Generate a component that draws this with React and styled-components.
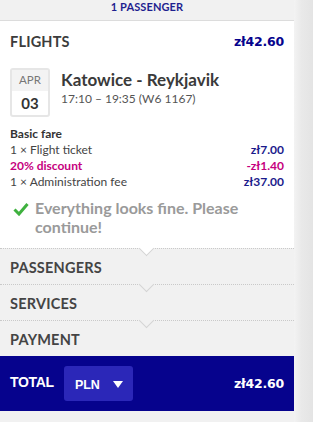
import React from 'react';
import styled, { createGlobalStyle } from 'styled-components';

const Global = createGlobalStyle`
  html, body { margin: 0; padding: 0; background: #ebebeb; }
  body { font-family: Lato, "Open Sans", sans-serif; }
`;

const Page = styled.div`
  display: flex;
  width: 313px;
  height: 422px;
  overflow: hidden;
`;

const Panel = styled.div`
  width: 294px;
  display: flex;
  flex-direction: column;
  background: #f1f1f1;
`;

const Side = styled.div`
  flex: 1;
  background: linear-gradient(90deg, #f3f3f3 0, #e9e9e9 40%, #e4e4e4 100%);
`;

const Passenger = styled.div`
  height: 21px;
  border-bottom: 1px solid #dcdcdc;
  display: flex;
  align-items: flex-start;
  justify-content: center;
  font-size: 11px;
  font-weight: 700;
  color: #1f1f8f;
  line-height: 13px;
  padding-top: 0;
  letter-spacing: 0.1px;
  box-sizing: border-box;
`;

const Card = styled.div`
  background: #fff;
  padding: 12px 10px 0 10px;
  height: 227px;
  box-sizing: border-box;
`;

const Head = styled.div`
  display: flex;
  justify-content: space-between;
  align-items: center;
  height: 16px;
`;

const Title = styled.div`
  font-size: 14.5px;
  font-weight: 700;
  color: #3c3c3c;
  letter-spacing: 0.2px;
`;

const Price = styled.div`
  font-family: "DejaVu Sans", Verdana, sans-serif;
  font-size: 12.5px;
  font-weight: 700;
  color: ${p => p.$light ? '#fff' : '#06038d'};
  letter-spacing: -0.2px;
`;

const Flight = styled.div`
  display: flex;
  gap: 11px;
  margin-top: 19px;
`;

const DateBox = styled.div`
  width: 36px;
  border: 2px solid #e6e6e6;
  border-radius: 3px;
  display: flex;
  flex-direction: column;
  align-items: center;
`;

const Month = styled.div`
  width: 100%;
  text-align: center;
  background: #f3f3f3;
  color: #777;
  font-size: 11.5px;
  height: 21px;
  line-height: 20px;
`;

const Day = styled.div`
  font-size: 15px;
  font-weight: 700;
  color: #333;
  height: 24px;
  line-height: 24px;
`;

const Route = styled.div`
  display: flex;
  flex-direction: column;
  padding-top: 1px;
`;

const City = styled.div`
  font-size: 17px;
  font-weight: 700;
  color: #3a3a3a;
  line-height: 21px;
`;

const Time = styled.div`
  font-size: 12px;
  color: #555;
  line-height: 16px;
  margin-top: 1px;
`;

const Fare = styled.div`
  margin-top: 9px;
  font-size: 12px;
  line-height: 16px;
`;

const FareTitle = styled.div`
  font-weight: 700;
  color: #333;
`;

const Line = styled.div`
  display: flex;
  justify-content: space-between;
  color: ${p => p.$pink ? '#c6007e' : '#444'};
  font-weight: ${p => p.$pink ? 700 : 400};
`;

const Amount = styled.span`
  font-weight: 700;
  color: ${p => p.$pink ? '#c6007e' : '#1a1a8c'};
`;

const Notice = styled.div`
  display: flex;
  align-items: flex-start;
  gap: 6px;
  margin-top: 8px;
  padding-left: 3px;
  font-size: 16px;
  font-weight: 700;
  color: #9a9a9a;
  line-height: 19px;
`;

const Step = styled.div`
  position: relative;
  height: 36px;
  border-top: 1px dotted #c9c9c9;
  padding: 1px 10px 0 10px;
  display: flex;
  align-items: center;
  font-size: 14.5px;
  font-weight: 700;
  color: #444;
  letter-spacing: 0.2px;
  box-sizing: border-box;

  &::before {
    content: '';
    position: absolute;
    left: 141px;
    top: -6px;
    width: 10px;
    height: 10px;
    background: ${p => p.$above};
    border-right: 1px solid #d4d4d4;
    border-bottom: 1px solid #d4d4d4;
    transform: rotate(45deg);
  }
`;

const Total = styled.div`
  height: 55px;
  background: #06038d;
  display: flex;
  align-items: center;
  padding: 0 10px;
  gap: 10px;
`;

const TotalLabel = styled.div`
  font-family: "Liberation Sans", Arial, sans-serif;
  font-size: 14px;
  font-weight: 700;
  color: #fff;
  letter-spacing: -0.3px;
  margin-top: -4px;
`;

const Currency = styled.button`
  width: 69px;
  height: 35px;
  border: 0;
  border-radius: 3px;
  background: #2b27b8;
  color: #fff;
  font-family: "Liberation Sans", Arial, sans-serif;
  font-size: 12.5px;
  font-weight: 700;
  display: flex;
  align-items: center;
  padding: 2px 0 0 11px;
  gap: 13px;
`;

const Spacer = styled.div`
  flex: 1;
`;

const Bottom = styled.div`
  flex: 1;
  background: #f1f1f1;
`;

export default function App() {
  return (
    <Page>
      <Global />
      <Panel>
        <Passenger>1 PASSENGER</Passenger>
        <Card>
          <Head>
            <Title>FLIGHTS</Title>
            <Price>zł42.60</Price>
          </Head>
          <Flight>
            <DateBox>
              <Month>APR</Month>
              <Day>03</Day>
            </DateBox>
            <Route>
              <City>Katowice - Reykjavik</City>
              <Time>17:10 – 19:35 (W6 1167)</Time>
            </Route>
          </Flight>
          <Fare>
            <FareTitle>Basic fare</FareTitle>
            <Line>1 × Flight ticket<Amount>zł7.00</Amount></Line>
            <Line $pink>20% discount<Amount $pink>-zł1.40</Amount></Line>
            <Line>1 × Administration fee<Amount>zł37.00</Amount></Line>
          </Fare>
          <Notice>
            <svg width="16" height="14" viewBox="0 0 16 14" style={{ marginTop: 4, flexShrink: 0 }}>
              <path d="M1.5 7.5 L6 12 L14.5 2" fill="none" stroke="#3fb13f" strokeWidth="3" />
            </svg>
            <span>Everything looks fine. Please continue!</span>
          </Notice>
        </Card>
        <Step $above="#fff">PASSENGERS</Step>
        <Step $above="#f1f1f1">SERVICES</Step>
        <Step $above="#f1f1f1">PAYMENT</Step>
        <Total>
          <TotalLabel>TOTAL</TotalLabel>
          <Currency>
            PLN
            <svg width="10" height="7" viewBox="0 0 10 7"><path d="M0 0 H10 L5 7 Z" fill="#fff" /></svg>
          </Currency>
          <Spacer />
          <Price $light>zł42.60</Price>
        </Total>
        <Bottom />
      </Panel>
      <Side />
    </Page>
  );
}
